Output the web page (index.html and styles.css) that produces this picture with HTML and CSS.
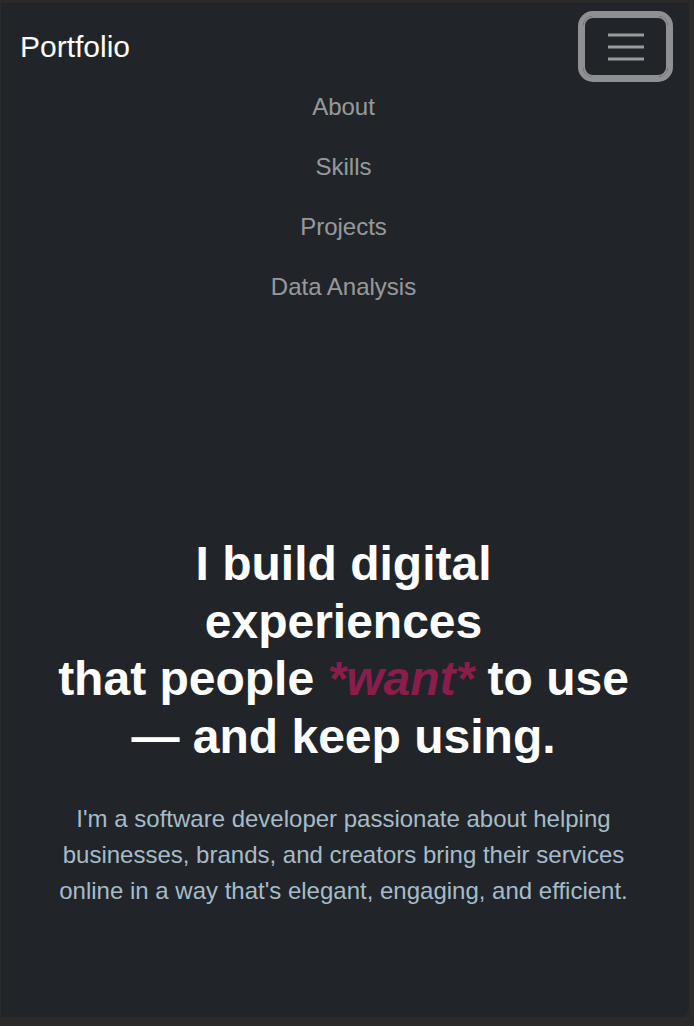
FILE: index.html
```html
<!DOCTYPE html>
<html lang="en">
<head>
<meta charset="utf-8">
<title>Portfolio</title>
<link rel="stylesheet" href="styles.css">
</head>
<body>
<div class="window">
  <nav class="navbar">
    <div class="nav-row">
      <a class="brand" href="#">Portfolio</a>
      <button class="toggler" aria-label="Toggle navigation">
        <svg width="36" height="30" viewBox="0 0 36 30" aria-hidden="true">
          <path d="M0 4H36M0 16H36M0 28H36" stroke="#9a9b9d" stroke-width="3"/>
        </svg>
      </button>
    </div>
    <ul class="nav-links">
      <li><a href="#about">About</a></li>
      <li><a href="#skills">Skills</a></li>
      <li><a href="#projects">Projects</a></li>
      <li><a href="#data">Data Analysis</a></li>
    </ul>
  </nav>
  <section class="hero">
    <h1 class="headline">I build digital experiences<br>that people <em class="accent">*want*</em> to use<br>— and keep using.</h1>
    <p class="lead">I'm a software developer passionate about helping businesses, brands, and creators bring their services online in a way that's elegant, engaging, and efficient.</p>
  </section>
</div>
</body>
</html>
```
FILE: styles.css
```css
html, body {
  margin: 0;
  padding: 0;
  background: #2a2a2a;
  height: 100%;
  overflow: hidden;
}
body {
  font-family: "Liberation Sans", Arial, sans-serif;
}
.window {
  margin: 3px 5px 0 1px;
  height: 1014px;
  background: #212529;
  border-radius: 0 0 8px 0;
  overflow: hidden;
}
.navbar {
  padding: 13px 21px 0 19px;
}
.nav-row {
  display: flex;
  align-items: center;
  justify-content: space-between;
  height: 60px;
}
.brand {
  color: #fff;
  font-size: 30px;
  line-height: 45px;
  text-decoration: none;
}
.toggler {
  width: 85px;
  height: 61px;
  padding: 0;
  margin: 0;
  background: transparent;
  border: 2px solid #8e9094;
  border-radius: 10px;
  box-shadow: 0 0 0 5px #8e9094;
  display: flex;
  align-items: center;
  justify-content: center;
}
.toggler svg {
  display: block;
}
.nav-links {
  list-style: none;
  margin: 1px 0 0;
  padding: 0 1px 0 0;
  text-align: center;
}
.nav-links a {
  display: block;
  padding: 12px 0;
  font-size: 24px;
  line-height: 36px;
  color: rgba(255, 255, 255, 0.55);
  text-decoration: none;
}
.hero {
  padding: 218px 56px 0 53px;
  text-align: center;
}
.headline {
  margin: 0 0 36px;
  font-size: 48px;
  line-height: 1.2;
  font-weight: 700;
  color: #fff;
}
.accent {
  color: #8a1d4b;
  font-style: italic;
}
.lead {
  margin: 0;
  font-size: 24px;
  line-height: 36px;
  color: #a6bcc8;
}
```
